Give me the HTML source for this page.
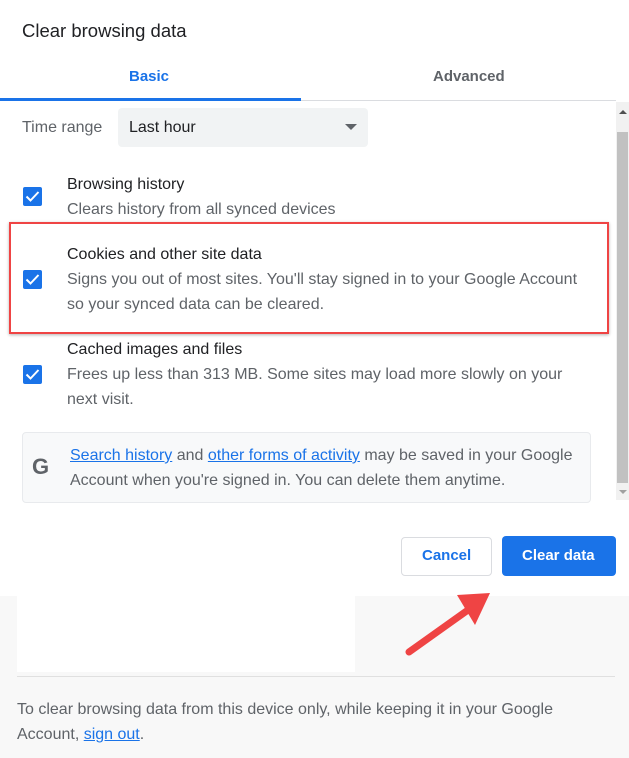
<!DOCTYPE html>
<html><head><style>
*{margin:0;padding:0;box-sizing:border-box}
body{width:629px;height:758px;background:#f8f8f8;font-family:"Liberation Sans",sans-serif;position:relative;overflow:hidden;color:#202124}
.a{position:absolute}
.dlg{left:0;top:0;width:629px;height:596px;background:#fff}
.t{font-size:16px;white-space:nowrap}
.g{color:#5f6368}
.cb{width:19px;height:19px;background:#1a73e8;border-radius:2px}
.cb svg{position:absolute;left:2px;top:3px}
a{color:#1a73e8;text-decoration:underline}
</style></head><body>
<div class="a dlg"></div>
<div class="a t" style="left:22px;top:20px;font-size:18.5px;color:#202124">Clear browsing data</div>
<div class="a t" style="left:129px;top:68px;color:#1a73e8;font-weight:bold;font-size:15px">Basic</div>
<div class="a t" style="left:433px;top:68px;color:#5f6368;font-weight:bold;font-size:15px">Advanced</div>
<div class="a" style="left:0;top:100px;width:616px;height:1px;background:#dadce0"></div>
<div class="a" style="left:0;top:98px;width:301px;height:3px;background:#1a73e8"></div>
<div class="a" style="left:616px;top:102px;width:13px;height:398px;background:#f1f1f1"></div>
<div class="a" style="left:617px;top:132px;width:11px;height:351px;background:#c1c1c1"></div>
<div class="a" style="left:619px;top:110px;width:0;height:0;border:4px solid transparent;border-bottom:4px solid #505050;border-top:0"></div>
<div class="a" style="left:619px;top:490px;width:0;height:0;border:4px solid transparent;border-top:4px solid #a0a0a0;border-bottom:0"></div>
<div class="a t g" style="left:22px;top:119px">Time range</div>
<div class="a" style="left:118px;top:108px;width:250px;height:39px;background:#f1f3f4;border-radius:4px"></div>
<div class="a t" style="left:129px;top:119px">Last hour</div>
<div class="a" style="left:345px;top:124px;width:0;height:0;border:6px solid transparent;border-top:6px solid #5f6368;border-bottom:0"></div>

<div class="a cb" style="left:23px;top:187px"><svg width="15" height="13" viewBox="0 0 15 13"><path d="M1.5 6.5l4 4 8-8.5" stroke="#fff" stroke-width="2" fill="none"/></svg></div>
<div class="a t" style="left:67px;top:176px">Browsing history</div>
<div class="a t g" style="left:67px;top:201px">Clears history from all synced devices</div>

<div class="a" style="left:9px;top:222px;width:600px;height:112px;border:2px solid #ef4444;box-shadow:0 1px 3px rgba(0,0,0,.3)"></div>
<div class="a cb" style="left:23px;top:270px"><svg width="15" height="13" viewBox="0 0 15 13"><path d="M1.5 6.5l4 4 8-8.5" stroke="#fff" stroke-width="2" fill="none"/></svg></div>
<div class="a t" style="left:67px;top:246px">Cookies and other site data</div>
<div class="a t g" style="left:67px;top:271px">Signs you out of most sites. You'll stay signed in to your Google Account</div>
<div class="a t g" style="left:67px;top:296px">so your synced data can be cleared.</div>

<div class="a cb" style="left:23px;top:365px"><svg width="15" height="13" viewBox="0 0 15 13"><path d="M1.5 6.5l4 4 8-8.5" stroke="#fff" stroke-width="2" fill="none"/></svg></div>
<div class="a t" style="left:67px;top:341px">Cached images and files</div>
<div class="a t g" style="left:67px;top:366px">Frees up less than 313 MB. Some sites may load more slowly on your</div>
<div class="a t g" style="left:67px;top:391px">next visit.</div>

<div class="a" style="left:22px;top:432px;width:569px;height:71px;background:#f8f9fa;border:1px solid #e8eaed;border-radius:4px"></div>
<div class="a t" style="left:32px;top:454px;font-size:22px;font-weight:bold;color:#5f6368">G</div>
<div class="a t g" style="left:70px;top:447px"><a href="#">Search history</a> and <a href="#">other forms of activity</a> may be saved in your Google</div>
<div class="a t g" style="left:70px;top:472px">Account when you're signed in. You can delete them anytime.</div>

<div class="a" style="left:401px;top:537px;width:91px;height:39px;border:1px solid #dadce0;border-radius:4px;background:#fff"></div>
<div class="a t" style="left:422px;top:547px;color:#1a73e8;font-weight:bold;font-size:15px">Cancel</div>
<div class="a" style="left:502px;top:536px;width:114px;height:40px;background:#1a73e8;border-radius:4px"></div>
<div class="a t" style="left:522px;top:547px;color:#fff;font-weight:bold;font-size:15px">Clear data</div>

<div class="a" style="left:17px;top:596px;width:338px;height:76px;background:#fff"></div>
<svg class="a" style="left:395px;top:590px" width="110" height="75" viewBox="0 0 110 75"><path d="M14 62L80 15" stroke="#ef4444" stroke-width="7" stroke-linecap="round"/><path d="M62 5L95 3 80 35z" fill="#ef4444"/></svg>
<div class="a" style="left:17px;top:676px;width:598px;height:1px;background:#e0e0e0"></div>
<div class="a t g" style="left:17px;top:701px">To clear browsing data from this device only, while keeping it in your Google</div>
<div class="a t g" style="left:17px;top:726px">Account, <a href="#">sign out</a>.</div>
</body></html>
